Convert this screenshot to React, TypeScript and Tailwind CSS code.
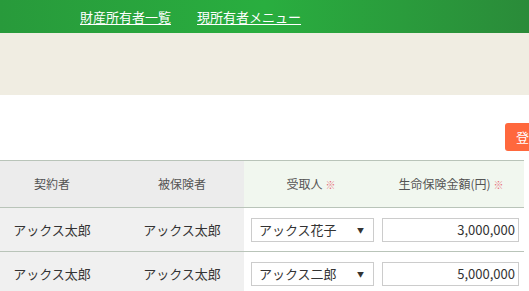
import { useState } from 'react'

type Row = { contractor: string; insured: string; receiver: string; amount: string }

const rows: Row[] = [
  { contractor: 'アックス太郎', insured: 'アックス太郎', receiver: 'アックス花子', amount: '3,000,000' },
  { contractor: 'アックス太郎', insured: 'アックス太郎', receiver: 'アックス二郎', amount: '5,000,000' },
]

const receivers = ['アックス花子', 'アックス二郎']

export default function App() {
  const [data, setData] = useState(rows)

  const setReceiver = (i: number, v: string) =>
    setData(prev => prev.map((r, j) => (j === i ? { ...r, receiver: v } : r)))

  return (
    <div
      className="w-[529px] h-[291px] overflow-hidden bg-white text-[#333]"
      style={{ fontFamily: '"Noto Sans CJK JP", "Noto Sans", sans-serif' }}
    >
      {/* Top nav */}
      <div className="h-[33px] bg-gradient-to-r from-[#289a3b] via-[#29ae3f] to-[#2a8b39] flex items-center pl-[80px] gap-[26px]">
        <a href="#" className="text-white text-[13px] underline underline-offset-2 leading-none">財産所有者一覧</a>
        <a href="#" className="text-white text-[13px] underline underline-offset-2 leading-none">現所有者メニュー</a>
      </div>

      {/* Beige band */}
      <div className="h-[62px] bg-[#f0ede2]" />

      {/* Toolbar */}
      <div className="h-[65px] flex items-start justify-end pt-[28px]">
        <button className="h-[28px] w-[24px] shrink-0 bg-[#ff683d] rounded-l-[3px] text-white text-[13px] pl-[11px] text-left overflow-hidden whitespace-nowrap">
          登録
        </button>
      </div>

      {/* Table */}
      <table className="-ml-[16px] w-[540px] border-collapse table-fixed text-[13px]">
        <colgroup>
          <col className="w-[136px]" />
          <col className="w-[124px]" />
          <col className="w-[134px]" />
          <col className="w-[146px]" />
        </colgroup>
        <thead>
          <tr className="h-[47px] border-y border-[#b9c4b9] text-[12px] text-[#555]">
            <th className="font-normal bg-[#ececec]">契約者</th>
            <th className="font-normal bg-[#ececec]">被保険者</th>
            <th className="font-normal bg-[#f1f7ef]">
              受取人<span className="text-[#e8707c] text-[10px] ml-[3px]">※</span>
            </th>
            <th className="font-normal bg-[#f1f7ef]">
              生命保険金額(円)<span className="text-[#e8707c] text-[10px] ml-[3px]">※</span>
            </th>
          </tr>
        </thead>
        <tbody>
          {data.map((r, i) => (
            <tr key={i} className="h-[44px] border-b border-[#b9c4b9]">
              <td className="text-center bg-[#f0f0f0]">{r.contractor}</td>
              <td className="text-center bg-[#f0f0f0]">{r.insured}</td>
              <td className="pl-[7px] pr-[4px]">
                <div className="relative w-[123px] h-[24px] border border-[#cccccc] bg-white">
                  <select
                    value={r.receiver}
                    onChange={e => setReceiver(i, e.target.value)}
                    className="appearance-none w-full h-full bg-transparent pl-[7px] text-[13px] outline-none"
                  >
                    {receivers.map(v => <option key={v}>{v}</option>)}
                  </select>
                  <span className="absolute right-[9px] top-[6px] text-[7px] leading-none pointer-events-none mt-[2px]">▼</span>
                </div>
              </td>
              <td className="pl-[4px] pr-[5px]">
                <input
                  defaultValue={r.amount}
                  className="w-[137px] h-[24px] border border-[#cccccc] text-right pr-[3px] text-[13px] outline-none"
                />
              </td>
            </tr>
          ))}
        </tbody>
      </table>
    </div>
  )
}
